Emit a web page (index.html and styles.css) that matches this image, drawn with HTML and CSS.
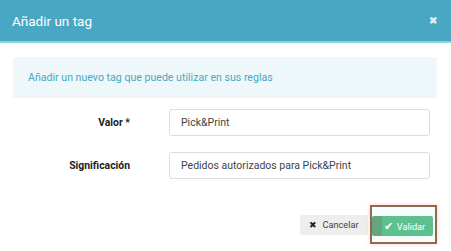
FILE: index.html
```html
<!DOCTYPE html>
<html lang="es">
<head>
  <meta charset="UTF-8" />
  <title>Añadir un tag</title>
  <link rel="stylesheet" href="styles.css">
</head>
<body>
  <div class="modal">
    <div class="modalHeader">
      <h3>Añadir un tag</h3>
      <span class="closeBtn">&#10006;</span>
    </div>

    <div class="modalBody">
      <div class="infoBox">Añadir un nuevo tag que puede utilizar en sus reglas</div>

      <div class="formRow">
        <label>Valor *</label>
        <input type="text" value="Pick&amp;Print">
      </div>
      <div class="formRow">
        <label>Significación</label>
        <input type="text" value="Pedidos autorizados para Pick&amp;Print">
      </div>
    </div>

    <div class="modalFooter">
      <button class="btn btnCancel"><span class="icon">&#10006;</span> Cancelar</button>
      <div class="highlight">
        <button class="btn btnValidate"><span class="icon">&#10004;</span> Validar</button>
      </div>
    </div>
  </div>
</body>
</html>
```

FILE: styles.css
```css
/* Base */
body {
  margin: 0;
  background: #fff;
  font-family: Roboto, "Liberation Sans", Arial, sans-serif;
  color: #333;
}

.modal {
  width: 451px;
  height: 251px;
  overflow: hidden;
}

/* Header */
.modalHeader {
  height: 41px;
  background: #4aa7c3;
  border-bottom: 2px solid #8fd0e1;
  display: flex;
  align-items: center;
  justify-content: space-between;
  padding: 0 14px 0 12px;
}

.modalHeader h3 {
  margin: 0;
  color: #fff;
  font-weight: 400;
  font-size: 13.5px;
}

.closeBtn {
  color: #d6eef5;
  font-size: 10px;
  font-weight: bold;
}

/* Body */
.modalBody {
  padding: 14px 14px 0 13px;
}

.infoBox {
  height: 41px;
  background: #eef8fa;
  color: #49a7c2;
  font-size: 10.6px;
  display: flex;
  align-items: center;
  padding: 0 15px;
}

.formRow {
  display: grid;
  grid-template-columns: 117px 1fr;
  column-gap: 39px;
  align-items: center;
  margin-top: 11px;
  padding-right: 7px;
}

.formRow + .formRow {
  margin-top: 16px;
}

.formRow label {
  text-align: right;
  font-weight: bold;
  font-size: 10.4px;
  color: #222;
}

.formRow input {
  height: 27px;
  box-sizing: border-box;
  border: 1px solid #ddd;
  border-radius: 3px;
  padding: 0 11px;
  font-family: inherit;
  font-size: 10.5px;
  color: #444;
}

/* Footer */
.modalFooter {
  display: flex;
  justify-content: flex-end;
  align-items: center;
  padding: 26px 14px 0 0;
}

.btn {
  height: 20px;
  border: none;
  border-radius: 2px;
  font-family: inherit;
  font-size: 9.2px;
  padding: 0;
  white-space: nowrap;
  display: flex;
  align-items: center;
  justify-content: center;
  cursor: pointer;
}

.btn .icon {
  font-size: 9px;
  margin-right: 5px;
}

.btnCancel {
  background: #eeeeee;
  color: #444;
  width: 68px;
  margin-right: 2px;
}

.btnCancel .icon {
  color: #222;
}

.btnValidate {
  background: #5cc08f;
  background-image: linear-gradient(to right, #67a67c 0, #67a67c 10px, #5cc08f 10px);
  color: #fff;
  width: 61px;
  padding-left: 4px;
}

.btnValidate .icon {
  font-size: 11px;
  margin-right: 4px;
}

/* annotation frame around the validate button */
.highlight {
  padding: 9px 2px 6px 0;
  border: 2px solid #8c6b4f;
  box-shadow: 0 0 4px rgba(255, 140, 170, 0.5);
  background: #f6fdfb;
  display: flex;
}
```
